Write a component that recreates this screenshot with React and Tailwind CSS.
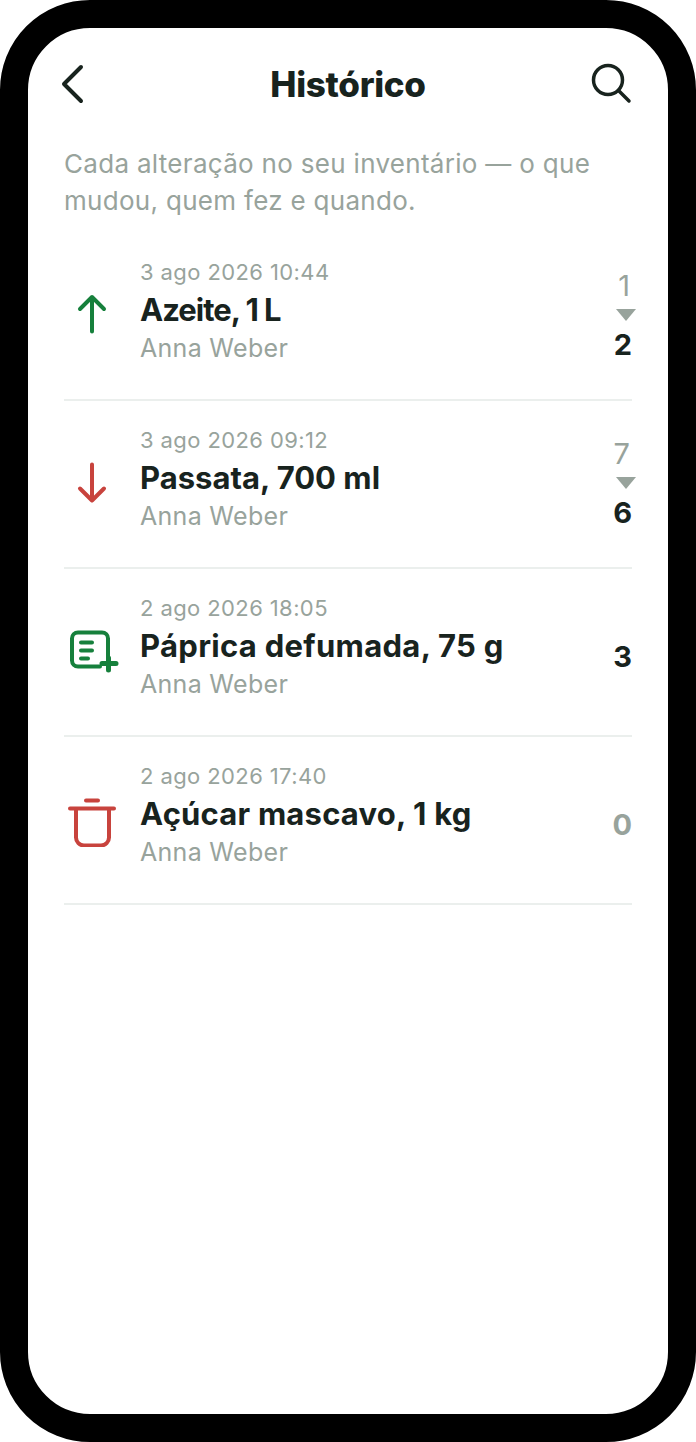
const entries = [
  { date: "3 ago 2026 10:44", name: "Azeite, 1 L", icon: "up", from: "1", to: "2", nameClass: "tracking-[-1px]" },
  { date: "3 ago 2026 09:12", name: "Passata, 700 ml", icon: "down", from: "7", to: "6", nameClass: "tracking-[0px]" },
  { date: "2 ago 2026 18:05", name: "Páprica defumada, 75 g", icon: "add", to: "3", nameClass: "tracking-[0.3px]" },
  { date: "2 ago 2026 17:40", name: "Açúcar mascavo, 1 kg", icon: "trash", to: "0", muted: true, nameClass: "tracking-[0.2px]" },
];

function EntryIcon({ type }) {
  if (type === "up") {
    return (
      <svg width="56" height="56" viewBox="0 0 56 56" fill="none" stroke="#16803c" strokeWidth="4" strokeLinecap="round" strokeLinejoin="round">
        <path d="M28 44.500V10M16 22 28 10l12 12" />
      </svg>
    );
  }
  if (type === "down") {
    return (
      <svg width="56" height="56" viewBox="0 0 56 56" fill="none" stroke="#c8433d" strokeWidth="4" strokeLinecap="round" strokeLinejoin="round">
        <path d="M28 9.500v36M16 33.500l12 12 12-12" />
      </svg>
    );
  }
  if (type === "add") {
    return (
      <svg width="56" height="56" viewBox="0 0 56 56" fill="none" stroke="#16803c" strokeWidth="4" strokeLinecap="round" strokeLinejoin="round">
        <path d="M36 43.500H14a6 6 0 0 1-6-6v-22a6 6 0 0 1 6-6h24a6 6 0 0 1 6 6v20" />
        <path d="M17 19.500h11M17 27.500h11M17 35.500h7" />
        <path d="M38 40.500h14M44.500 35v12" strokeWidth="5" />
      </svg>
    );
  }
  return (
    <svg width="56" height="56" viewBox="0 0 56 56" fill="none" stroke="#c8433d" strokeWidth="4" strokeLinecap="round" strokeLinejoin="round">
      <path d="M22 9.500h12M6 17.500h44M12 17.500v29a8 8 0 0 0 8 8h17a8 8 0 0 0 8-8v-29" />
    </svg>
  );
}

function Entry({ entry }) {
  return (
    <div className="flex h-[168px] items-center border-b-2 border-[#ebefed]">
      <div className="mb-[3px] flex w-[76px] shrink-0">
        <EntryIcon type={entry.icon} />
      </div>
      <div className="mb-[11px] min-w-0 flex-1">
        <p className="mb-[2px] text-[22px] leading-[32px] tracking-[0.4px] text-[#98a39c]">{entry.date}</p>
        <p className={`text-[31px] leading-[40px] font-bold text-[#18231e] ${entry.nameClass}`}>{entry.name}</p>
        <p className="text-[25px] leading-[36px] tracking-[0.3px] text-[#98a39c]">Anna Weber</p>
      </div>
      <div className={`flex flex-col items-end ${entry.from ? "" : "mt-[9px]"}`}>
        {entry.from && (
          <>
            <span className="mr-[2px] text-[29px] leading-[32px] text-[#98a39c]">{entry.from}</span>
            <svg className="-mr-1 my-[7px]" width="20" height="12" viewBox="0 0 20 12" fill="#98a39c">
              <path d="M0 0h20L10 12z" />
            </svg>
          </>
        )}
        <span className={`text-[29px] leading-[34px] font-bold ${entry.muted ? "text-[#98a39c]" : "text-[#18231e]"}`}>{entry.to}</span>
      </div>
    </div>
  );
}

export default function App() {
  return (
    <div className="h-[1442px] w-[696px] bg-white font-['Inter',sans-serif]">
      <div className="h-full overflow-hidden rounded-[90px] border-[28px] border-black bg-white px-[36px]">
        <header className="flex h-[112px] items-center justify-between">
          <div className="w-[42px]">
            <svg className="-ml-[4px]" width="26" height="40" viewBox="0 0 26 40" fill="none" stroke="#18231e" strokeWidth="4" strokeLinecap="round" strokeLinejoin="round">
              <path d="M21 3 4 20l17 17" />
            </svg>
          </div>
          <h1 className="text-[35px] font-extrabold tracking-[-0.3px] text-[#18231e]">Histórico</h1>
          <svg width="42" height="42" viewBox="0 0 42 42" fill="none" stroke="#18231e" strokeWidth="3.500" strokeLinecap="round">
            <circle cx="18" cy="17" r="14.500" />
            <path d="m29 28 10 10" />
          </svg>
        </header>
        <p className="mt-[5px] text-[26px] leading-[37px] tracking-[0.3px] text-[#98a39c]">
          Cada alteração no seu inventário — o que mudou, quem fez e quando.
        </p>
        <div className="mt-[14px]">
          {entries.map((entry) => (
            <Entry key={entry.name} entry={entry} />
          ))}
        </div>
      </div>
    </div>
  );
}
